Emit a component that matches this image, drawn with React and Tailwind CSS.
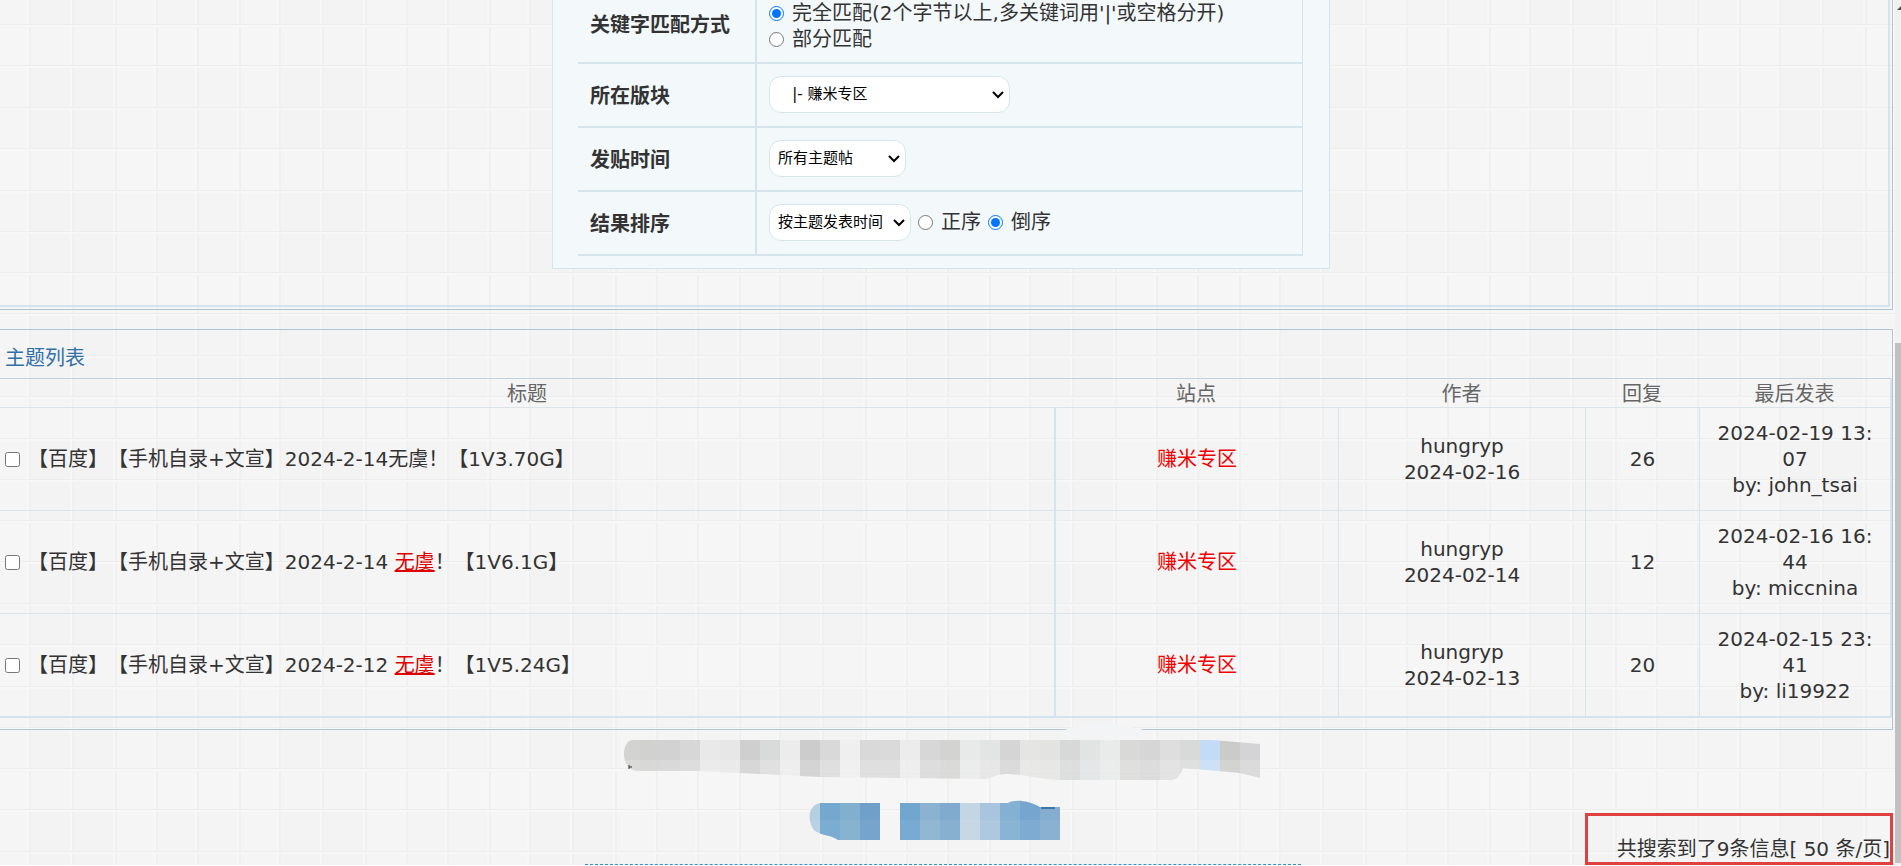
import React, { useState } from "react";

const threads = [
  {
    id: 1,
    title: "【百度】【手机自录+文宣】2024-2-14无虞！",
    size: "【1V3.70G】",
    author: "hungryp",
    date: "2024-02-16",
    replies: 26,
    lastPost: "2024-02-19 13:07",
    lastBy: "john_tsai",
  },
  {
    id: 2,
    title: "【百度】【手机自录+文宣】2024-2-14 ",
    keyword: "无虞",
    size: "！【1V6.1G】",
    author: "hungryp",
    date: "2024-02-14",
    replies: 12,
    lastPost: "2024-02-16 16:44",
    lastBy: "miccnina",
  },
  {
    id: 3,
    title: "【百度】【手机自录+文宣】2024-2-12 ",
    keyword: "无虞",
    size: "！【1V5.24G】",
    author: "hungryp",
    date: "2024-02-13",
    replies: 20,
    lastPost: "2024-02-15 23:41",
    lastBy: "li19922",
  },
];

const columnLines = [28, 71, 114, 155, 196, 238];
const rowLines = [24, 65, 107, 148, 190, 231];

// faint paper grid behind the whole page
function PaperGrid() {
  return (
    <svg className="absolute inset-0 -z-10 h-full w-full" aria-hidden="true">
      <defs>
        <pattern id="paper" width="250" height="248" patternUnits="userSpaceOnUse">
          <rect width="250" height="248" fill="#f5f5f5" />
          <rect x="28" width="86" height="248" fill="#f3f3f3" />
          <rect x="155" width="82" height="248" fill="#f4f4f4" />
          <rect y="24" width="250" height="41" fill="#f8f8f8" opacity="0.5" />
          <rect y="148" width="250" height="42" fill="#f8f8f8" opacity="0.5" />
          {columnLines.map((x) => (
            <g key={x}>
              <rect x={x - 1} width="2" height="248" fill="#f7f7f7" />
              <rect x={x + 1} width="2" height="248" fill="#f0f0f0" />
            </g>
          ))}
          {rowLines.map((y) => (
            <g key={y}>
              <rect y={y} width="250" height="1" fill="#ededed" />
              <rect y={y + 1} width="250" height="2" fill="#f7f7f7" />
            </g>
          ))}
        </pattern>
      </defs>
      <rect width="100%" height="100%" fill="url(#paper)" />
    </svg>
  );
}

function Radio({ name, value, checked, onChange, children }) {
  return (
    <label className="flex items-center gap-2">
      <input
        type="radio"
        name={name}
        value={value}
        checked={checked}
        onChange={() => onChange(value)}
        className="h-[15px] w-[15px] accent-[#0075ff]"
      />
      {children}
    </label>
  );
}

function Select({ id, className, children }) {
  return (
    <div className="relative w-fit">
      <select
        id={id}
        className={`block h-[37px] appearance-none rounded-xl border border-[#d8e6ea] bg-white pl-2 text-[15px] text-black ${className}`}
      >
        {children}
      </select>
      <svg
        className="pointer-events-none absolute right-1.5 top-3.5 h-2.5 w-3"
        viewBox="0 0 12 10"
        fill="none"
        stroke="#000"
        strokeWidth="2"
        aria-hidden="true"
      >
        <path d="M1 2l5 5 5-5" />
      </svg>
    </div>
  );
}

function FormRow({ label, htmlFor, children }) {
  return (
    <tr className="h-16 border-b-2 border-[#d6e5eb]">
      <th className="w-[178px] border-r-2 border-[#d6e5eb] pl-3 pt-0.5 text-left font-bold">
        <label htmlFor={htmlFor}>{label}</label>
      </th>
      <td className="border-r border-[#d6e5eb] pb-0.5 pl-3">{children}</td>
    </tr>
  );
}

function SearchForm() {
  const [match, setMatch] = useState("full");
  const [order, setOrder] = useState("desc");

  return (
    <form className="mx-auto -mt-3.5 w-[778px] border border-t-0 border-[#d6e5eb] bg-[#f3f8fa] pb-3 pl-[25px] pr-[26px]">
      <table className="w-full border-collapse">
        <tbody>
          <FormRow label="关键字匹配方式">
            <div className="pb-2 pt-3.5">
              <Radio name="match" value="full" checked={match === "full"} onChange={setMatch}>
                完全匹配(2个字节以上,多关键词用'|'或空格分开)
              </Radio>
              <Radio name="match" value="part" checked={match === "part"} onChange={setMatch}>
                部分匹配
              </Radio>
            </div>
          </FormRow>
          <FormRow label="所在版块" htmlFor="forum">
            <Select id="forum" className="w-[241px]">
              <option>&nbsp;&nbsp;&nbsp;|- 赚米专区</option>
            </Select>
          </FormRow>
          <FormRow label="发贴时间" htmlFor="time">
            <Select id="time" className="w-[137px]">
              <option>所有主题帖</option>
            </Select>
          </FormRow>
          <FormRow label="结果排序" htmlFor="sort">
            <div className="flex items-center gap-[7px]">
              <Select id="sort" className="w-[142px]">
                <option>按主题发表时间</option>
              </Select>
              <Radio name="order" value="asc" checked={order === "asc"} onChange={setOrder}>
                正序
              </Radio>
              <Radio name="order" value="desc" checked={order === "desc"} onChange={setOrder}>
                倒序
              </Radio>
            </div>
          </FormRow>
        </tbody>
      </table>
    </form>
  );
}

function ThreadRow({ thread }) {
  const cell = "border-l border-t border-[#d9e5ea]";

  return (
    <tr className="h-[103px]">
      <td className="border-t border-[#d9e5ea] pl-[5px]">
        <label className="flex items-center gap-2">
          <input type="checkbox" className="h-[15px] w-[15px]" />
          <span className="whitespace-pre [text-spacing-trim:space-all]">
            {thread.title}
            {thread.keyword && <u className="text-[#d00]">{thread.keyword}</u>}
            {thread.size}
          </span>
        </label>
      </td>
      <td className="border-l-2 border-t border-[#d4e4ee] border-t-[#d9e5ea]">
        <a href="#forum" className="text-[#f00000]">赚米专区</a>
      </td>
      <td className={cell}>
        {thread.author}
        <br />
        {thread.date}
      </td>
      <td className={cell}>{thread.replies}</td>
      <td className={`${cell} break-all px-3.5`}>
        {thread.lastPost}
        <br />
        by: {thread.lastBy}
      </td>
    </tr>
  );
}

function ThreadList() {
  return (
    <section className="mt-[19px] border border-l-0 border-[#afc5d5] pb-[11px]">
      <h2 className="pb-[7px] pl-[5px] pt-[15px] leading-[26px] text-[#3070a8]">主题列表</h2>
      <table className="w-full table-fixed border-separate border-spacing-0 border-b-2 border-r-2 border-[#d4e4ee] text-center">
        <colgroup>
          <col />
          <col className="w-[284px]" />
          <col className="w-[247px]" />
          <col className="w-[114px]" />
          <col className="w-[191px]" />
        </colgroup>
        <thead>
          <tr className="h-[29px] text-[#666]">
            {["标题", "站点", "作者", "回复", "最后发表"].map((name) => (
              <th key={name} className="border-t border-[#c3d2dc] pt-0.5 font-normal">
                {name}
              </th>
            ))}
          </tr>
        </thead>
        <tbody>
          {threads.map((thread) => (
            <ThreadRow key={thread.id} thread={thread} />
          ))}
        </tbody>
      </table>
    </section>
  );
}

const greyBlocks = [
  "#d3d3d2", "#d1d1cf", "#d2d2d2", "#d7d7d7", "#e9e9e9", "#e7e7e7", "#cfcfcf", "#d9dbda",
  "#ececec", "#cccccc", "#d9d9d9", "#efefef", "#d9d9d9", "#dadada", "#ececec", "#d7d7d7",
  "#d3d3d1", "#e8eaea", "#e3e4e4", "#d5d5d6", "#e5e5e4", "#e3e3e2", "#d7d9d8", "#e0e4e3",
  "#e9ebeb", "#d9d9d8", "#d6d6d6", "#dedede", "#d8d9d9", "#c4dbf6", "#cbcbc9", "#d4d4d6",
];

const blueBlocks = [
  "#b4d0e1", "#74a8cf", "#82afcd", "#709fc9", "none", "#71a6cf", "#8bb3d1", "#80abce",
  "#c4d5e3", "#a9c5dd", "#84b0d2", "#76a6cf", "#85add0",
];

// pixelated strips that hide the footer text
function Mosaic() {
  return (
    <svg
      className="mx-auto block h-[135px] w-[700px] overflow-visible"
      viewBox="600 730 700 135"
      aria-hidden="true"
    >
      <clipPath id="greyShape">
        <path d="M632 740H1212L1260 744V778L1240 773 1183 768C1179 778 1176 780 1170 780H1060C1035 779 1025 774 1005 774C995 775 992 778 985 779L820 777 700 771H638C628 771 624 762 624 754C624 746 628 740 632 740Z" />
      </clipPath>
      <clipPath id="blueShape">
        <path d="M820 803H1008C1014 799 1028 800 1040 807H1060V840H838C832 835 822 836 815 831C808 824 806 806 820 803Z" />
      </clipPath>
      <path d="M1060 732Q1080 723 1105 724T1150 732V738H1060Z" fill="#f3f4f5" />
      <g clipPath="url(#greyShape)">
        {greyBlocks.map((color, i) => (
          <g key={i} fill={color}>
            <rect x={620 + i * 20} y="740" width="20" height="20" />
            <rect x={620 + i * 20} y="760" width="20" height="22" opacity="0.8" />
          </g>
        ))}
      </g>
      <g clipPath="url(#blueShape)">
        {blueBlocks.map((color, i) => (
          <g key={i} fill={color}>
            <rect x={800 + i * 20} y="798" width="20" height="22" />
            <rect x={800 + i * 20} y="820" width="20" height="20" opacity="0.95" />
          </g>
        ))}
      </g>
      <path d="M1041 808h14" stroke="#3977ad" strokeWidth="2" />
      <path d="M629 765v4M629 767h3" stroke="#333" />
    </svg>
  );
}

export default function App() {
  return (
    <div className="relative isolate flex overflow-hidden font-['DejaVu_Sans','Noto_Sans_CJK_SC',sans-serif] text-xl leading-[26px] text-[#333]">
      <PaperGrid />
      <main className="min-w-0 grow">
        <section className="border-b border-r border-[#afc5d5] pb-0.5 pr-0.5">
          <div className="border-b-2 border-r-2 border-[#d4e4ee] pb-9 pr-1.5">
            <SearchForm />
          </div>
        </section>
        <ThreadList />
        <footer className="relative pl-1.5">
          <Mosaic />
          <div className="absolute inset-x-0 bottom-0 flex justify-center pr-2">
            <div className="w-[716px] border-b border-dashed border-[#3d8ac8]" />
          </div>
          <p className="absolute bottom-0 right-0 flex h-[52px] w-[308px] items-end justify-end whitespace-pre border-3 border-[#e0403e]">
            共搜索到了9条信息[ 50 条/页]
          </p>
        </footer>
      </main>
      <div className="relative ml-0.5 w-1.5 shrink-0 bg-[#f1f1f1] pt-[343px]">
        <svg className="absolute right-0 top-1.5 h-1 w-1" viewBox="0 0 4 4" aria-hidden="true">
          <path d="M0 4L4 0V4Z" fill="#505050" />
        </svg>
        <div className="h-[520px] bg-[#c1c1c1]" />
      </div>
    </div>
  );
}
